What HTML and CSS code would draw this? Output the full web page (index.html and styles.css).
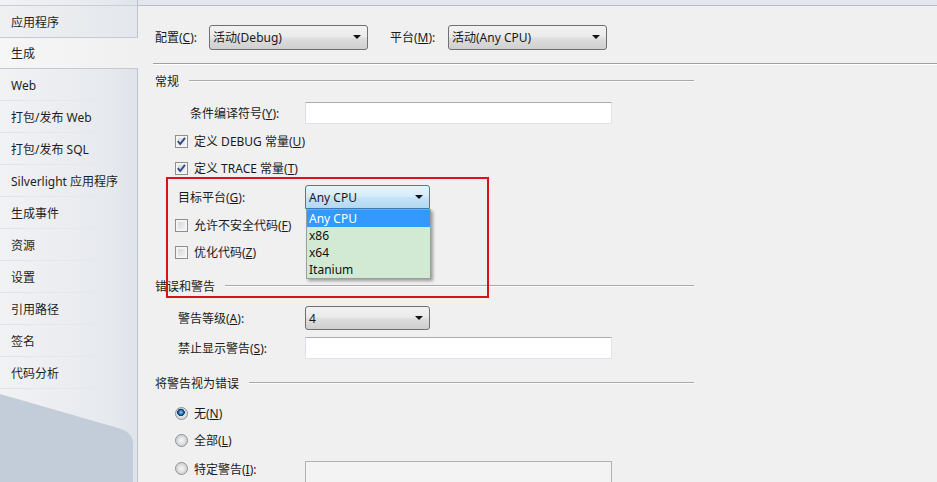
FILE: index.html
```html
<!DOCTYPE html>
<html lang="zh-CN">
  <head>
    <meta charset="UTF-8" />
    <title>项目属性 - 生成</title>
    <link rel="stylesheet" href="styles.css">
  </head>
  <body>
    <div class="window">
      <!-- left tab strip -->
      <ul class="tabs">
        <li class="tab first">应用程序</li>
        <li class="tab active">生成</li>
        <li class="tab">Web</li>
        <li class="tab">打包/发布 Web</li>
        <li class="tab">打包/发布 SQL</li>
        <li class="tab">Silverlight 应用程序</li>
        <li class="tab">生成事件</li>
        <li class="tab">资源</li>
        <li class="tab">设置</li>
        <li class="tab">引用路径</li>
        <li class="tab">签名</li>
        <li class="tab">代码分析</li>
        <li class="tabs-foot">
          <svg width="137" height="93" viewBox="0 0 137 93">
            <path d="M0 5 L118 39 Q133 43 133 55 L133 93 L0 93 Z" fill="#c3ccd9" />
          </svg>
        </li>
      </ul>

      <!-- build page -->
      <div class="page">
        <div class="topbar"></div>

        <div class="toolbar">
          <span class="caption label">配置(<u>C</u>):</span>
          <div class="combo wide"><span class="caption">活动(Debug)</span></div>
          <span class="caption label second">平台(<u>M</u>):</span>
          <div class="combo wide"><span class="caption">活动(Any CPU)</span></div>
        </div>

        <div class="content">
          <div class="group first-group"><span class="caption">常规</span></div>

          <div class="row field">
            <span class="caption field-label indent">条件编译符号(<u>Y</u>):</span>
            <div class="textbox"></div>
          </div>

          <div class="row check">
            <span class="checkbox checked"><svg width="11" height="11" viewBox="0 0 11 11"><path d="M1.8 5.2 L4.2 8 L9 1.8" /></svg></span>
            <span class="caption">定义 DEBUG 常量(<u>U</u>)</span>
          </div>

          <div class="row check">
            <span class="checkbox checked"><svg width="11" height="11" viewBox="0 0 11 11"><path d="M1.8 5.2 L4.2 8 L9 1.8" /></svg></span>
            <span class="caption">定义 TRACE 常量(<u>T</u>)</span>
          </div>

          <div class="row field">
            <span class="caption field-label">目标平台(<u>G</u>):</span>
            <div class="combo small open">
              <span class="caption">Any CPU</span>
              <ul class="dropdown">
                <li class="selected">Any CPU</li>
                <li>x86</li>
                <li>x64</li>
                <li>Itanium</li>
              </ul>
            </div>
          </div>

          <div class="row check">
            <span class="checkbox"></span>
            <span class="caption">允许不安全代码(<u>F</u>)</span>
          </div>

          <div class="row check">
            <span class="checkbox"></span>
            <span class="caption">优化代码(<u>Z</u>)</span>
          </div>

          <div class="group"><span class="caption">错误和警告</span></div>

          <div class="row field">
            <span class="caption field-label">警告等级(<u>A</u>):</span>
            <div class="combo small"><span class="caption">4</span></div>
          </div>

          <div class="row field">
            <span class="caption field-label">禁止显示警告(<u>S</u>):</span>
            <div class="textbox"></div>
          </div>

          <div class="group"><span class="caption">将警告视为错误</span></div>

          <div class="row check">
            <span class="radio checked"></span>
            <span class="caption">无(<u>N</u>)</span>
          </div>

          <div class="row check">
            <span class="radio"></span>
            <span class="caption">全部(<u>L</u>)</span>
          </div>

          <div class="row check top">
            <span class="radio"></span>
            <span class="caption radio-label">特定警告(<u>I</u>):</span>
            <div class="textbox multiline disabled"></div>
          </div>
        </div>

        <!-- highlight around the platform settings -->
        <div class="callout"></div>
      </div>
    </div>
  </body>
</html>
```

FILE: styles.css
```css
* {
  box-sizing: border-box;
}

body {
  margin: 0;
  padding: 0;
  overflow: hidden;
  font-family: "Noto Sans", "Noto Sans CJK SC", sans-serif;
  font-size: 12px;
  line-height: 16px;
  color: #1a1a1a;
}

u {
  text-decoration: underline;
  text-underline-offset: 1px;
}

/* CJK glyphs sit high in the line box, nudge them down */
.caption {
  padding-top: 2px;
}

.window {
  display: flex;
  height: 482px;
  width: 937px;
}

/* tab strip */

.tabs {
  list-style: none;
  margin: 0;
  padding: 5px 0 0 0;
  width: 138px;
  display: flex;
  flex-direction: column;
  border-right: 1px solid #bcc4cf;
  background: linear-gradient(to right, #f1f2f4, #e6e9ee 80%, #dfe3ea);
}

.tab {
  height: 32px;
  padding: 2px 0 0 11px;
  display: flex;
  align-items: center;
  color: #1e1e1e;
  background: linear-gradient(to right, #dfe2e7, rgba(223, 226, 231, 0)) left bottom / 100% 1px no-repeat;
}

.tab.first {
  height: 32px;
  border-top: 1px solid #c9cfd8;
  background: linear-gradient(to right, #eef0f2, #e4e7ec);
}

.tab.active {
  margin-right: -1px;
  border-top: 1px solid #c3cad4;
  border-bottom: 1px solid #c3cad4;
  background: linear-gradient(to right, #f6f6f7, #f0f0f0);
}

.tabs-foot {
  flex: 1;
  overflow: hidden;
}

.tabs-foot svg {
  display: block;
}

/* page */

.page {
  flex: 1;
  position: relative;
  background: #f0f0f0;
}

.topbar {
  height: 6px;
  background: #e4e8ee;
  border-bottom: 1px solid #b5bfcc;
}

.toolbar {
  display: flex;
  align-items: center;
  height: 58px;
  padding: 19px 0 14px 2px;
  margin-left: 15px;
  border-bottom: 1px solid #a0a0a0;
  box-shadow: 0 1px 0 #fff;
}

.toolbar .label {
  width: 54px;
  flex-shrink: 0;
}

.toolbar .label.second {
  width: 58px;
  margin-left: 22px;
}

.content {
  display: flex;
  flex-direction: column;
  padding-left: 17px;
  padding-top: 3px;
}

/* group headings with etched rule */

.group {
  display: flex;
  align-items: center;
  width: 539px;
  height: 28px;
  margin-top: 7px;
  margin-bottom: 2px;
}

.group.first-group {
  margin-top: 0;
}

.group::after {
  content: "";
  flex: 1;
  margin-left: 10px;
  border-top: 1px solid #a9a9a9;
  border-bottom: 1px solid #fcfcfc;
}

.row {
  display: flex;
  align-items: center;
}

.row.field {
  height: 28px;
  margin-top: 2px;
  padding-left: 23px;
}

.row.check {
  height: 26px;
  margin-top: 1px;
  padding-left: 20px;
}

.row.top {
  align-items: flex-start;
  padding-top: 6px;
}

.field-label {
  width: 127px;
  flex-shrink: 0;
}

.field-label.indent {
  padding-left: 12px;
}

/* inputs */

.textbox {
  width: 307px;
  height: 22px;
  background: #fff;
  border: 1px solid #e2e3ea;
  border-top-color: #abadb3;
  border-left-color: #dbdfe6;
}

.textbox.multiline {
  height: 40px;
  margin-top: 1px;
}

.textbox.disabled {
  background: #f3f3f3;
  border-color: #adb2b5;
}

.radio-label {
  width: 111px;
}

.combo {
  position: relative;
  height: 24px;
  padding-left: 3px;
  display: flex;
  align-items: center;
  border: 1px solid #707070;
  border-radius: 3px;
  background: linear-gradient(#f2f2f2 0%, #ebebeb 45%, #dddddd 55%, #cfcfcf 100%);
}

.combo::after {
  content: "";
  position: absolute;
  right: 6px;
  top: 9px;
  border-left: 4px solid transparent;
  border-right: 4px solid transparent;
  border-top: 4px solid #111;
}

.combo.wide {
  width: 159px;
  height: 25px;
}

.combo.small {
  width: 125px;
}

.combo.open {
  border-color: #3c7fb1;
  border-radius: 3px 3px 0 0;
  background: linear-gradient(#e6f4fc 0%, #d6ecfa 45%, #c4e2f7 55%, #b4d8f1 100%);
}

.dropdown {
  list-style: none;
  position: absolute;
  top: 23px;
  left: 0;
  width: 125px;
  margin: 0;
  padding: 0;
  z-index: 5;
  background: #d2ead3;
  border: 1px solid #9aa09a;
  box-shadow: 2px 2px 3px rgba(0, 0, 0, 0.35);
}

.dropdown li {
  height: 17px;
  line-height: 17px;
  padding-left: 2px;
  color: #111;
}

.dropdown li.selected {
  background: #3399ff;
  color: #fff;
}

/* checkboxes and radios */

.checkbox {
  width: 13px;
  height: 13px;
  margin-right: 6px;
  flex-shrink: 0;
  display: flex;
  align-items: center;
  justify-content: center;
  border: 1px solid #8e8f8f;
  background: linear-gradient(135deg, #cfd3d9, #f6f6f6);
  box-shadow: inset 0 0 0 2px #f4f4f4;
}

.checkbox svg path {
  fill: none;
  stroke: #2d4a86;
  stroke-width: 1.9;
}

.radio {
  width: 13px;
  height: 13px;
  margin-right: 6px;
  flex-shrink: 0;
  border-radius: 50%;
  border: 1px solid #8e8f8f;
  background: radial-gradient(circle at 50% 50%, #f6f6f6 0, #e4e4e4 3px, #cfd2d6 5px, #f4f4f4 6px);
}

.row.top .radio {
  margin-top: 2px;
}

.radio.checked {
  background:
    radial-gradient(circle at 45% 40%, #a8dbf8 0, #3b86c4 1.6px, #114a86 3px, #0d3a6c 3.6px, rgba(13, 58, 108, 0) 4px),
    radial-gradient(circle at 50% 50%, #e8eef3 0, #d4dbe2 5px, #f4f4f4 6px);
}

/* red annotation frame */

.callout {
  position: absolute;
  left: 28px;
  top: 177px;
  width: 323px;
  height: 121px;
  border: 2px solid #d8141b;
  pointer-events: none;
}
```
